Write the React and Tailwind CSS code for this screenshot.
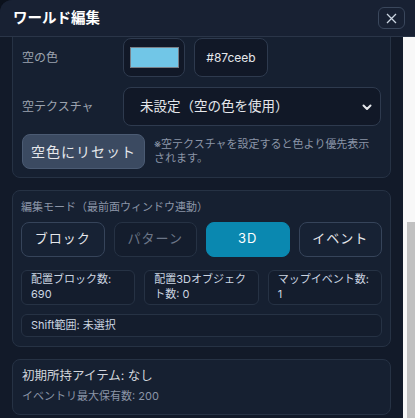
import React from 'react';

const font = { fontFamily: 'Inter, "Noto Sans CJK JP", sans-serif' };

const modes = [
  { label: 'ブロック', state: 'idle' },
  { label: 'パターン', state: 'disabled' },
  { label: '3D', state: 'active' },
  { label: 'イベント', state: 'idle' },
];

const stats = [
  ['配置ブロック数:', '690'],
  ['配置3Dオブジェク', 'ト数: 0'],
  ['マップイベント数:', '1'],
];

const ModeButton = ({ label, state }) => {
  const cls =
    state === 'active'
      ? 'bg-[#0a88b0] border-[#0a88b0] text-white'
      : state === 'disabled'
      ? 'bg-[#141d2d] border-[#263244] text-[#6b7587]'
      : 'bg-[#172234] border-[#36445a] text-[#e5e7eb]';
  return (
    <button className={`h-[35px] rounded-lg border text-[13px] tracking-[1px] ${cls}`}>
      {label}
    </button>
  );
};

const App = () => {
  return (
    <div className="w-[415px] h-[418px] bg-[#0b111c] overflow-hidden" style={font}>
      <div className="w-[418px] h-full flex flex-col rounded-tl-xl overflow-hidden bg-[#121a29]">
        {/* Header */}
        <div className="h-[37px] shrink-0 flex items-center justify-between pl-[13px] pr-[13px] bg-[#182133] border-b border-[#2a3548]">
          <h2 className="text-[14.5px] font-bold text-white">ワールド編集</h2>
          <button className="w-[27px] h-[22px] rounded-md border border-[#3a475c] text-[#cbd5e1] flex items-center justify-center">
            <svg width="11" height="11" viewBox="0 0 11 11" fill="none" stroke="currentColor" strokeWidth="1.3">
              <path d="M1 1l9 9M10 1l-9 9" />
            </svg>
          </button>
        </div>

        {/* Body */}
        <div className="flex-1 flex min-h-0">
          <div className="flex-1 overflow-hidden px-3">
            <div className="-mt-[9px] flex flex-col">
              {/* Sky section */}
              <section className="rounded-lg border border-[#263244] bg-[#162031] pl-[9px] pr-[9px] pt-[9px] pb-[8px]">
                <div className="flex items-center">
                  <span className="w-[101px] text-[12px] text-[#9ca3af]">空の色</span>
                  <div className="w-[62px] h-[39px] rounded-lg border border-[#2e3a4e] bg-[#111827] flex items-center justify-center">
                    <div className="w-[49px] h-[21px] bg-[#71c6e7] border border-[#7a7f87]" />
                  </div>
                  <div className="ml-[9px] w-[74px] h-[39px] rounded-lg border border-[#2e3a4e] bg-[#111827] flex items-center justify-center text-[12px] text-[#e5e7eb]">
                    #87ceeb
                  </div>
                </div>
                <div className="flex items-center mt-[10px]">
                  <span className="w-[101px] text-[12px] text-[#9ca3af]">空テクスチャ</span>
                  <div className="flex-1 h-[39px] rounded-lg border border-[#2e3a4e] bg-[#111827] flex items-center justify-between pl-[16px] pr-[7px] text-[13.5px] text-[#e5e7eb]">
                    <span>未設定（空の色を使用）</span>
                    <svg width="12" height="12" viewBox="0 0 12 12" fill="none" stroke="#e5e7eb" strokeWidth="2" strokeLinecap="round" strokeLinejoin="round">
                      <path d="M2.5 4.5L6 8l3.5-3.5" />
                    </svg>
                  </div>
                </div>
                <div className="flex items-start mt-[8px]">
                  <button className="shrink-0 w-[123px] h-[35px] rounded-lg border border-[#4b5b73] bg-[#3b4a61] text-[14px] tracking-[1px] text-[#e5e7eb]">
                    空色にリセット
                  </button>
                  <p className="ml-[9px] mt-[3px] w-[222px] text-[11px] leading-[14px] text-[#8b95a7]">
                    ※空テクスチャを設定すると色より優先表示されます。
                  </p>
                </div>
              </section>

              {/* Edit mode section */}
              <section className="mt-[12px] rounded-lg border border-[#263244] bg-[#162031] px-[8px] pt-[8px] pb-[9px]">
                <p className="text-[11px] text-[#8b95a7]">編集モード（最前面ウィンドウ連動）</p>
                <div className="mt-[6px] grid grid-cols-4 gap-[9px]">
                  {modes.map((m) => (
                    <ModeButton key={m.label} {...m} />
                  ))}
                </div>
                <div className="mt-[13px] grid grid-cols-3 gap-[9px]">
                  {stats.map(([a, b]) => (
                    <div key={a} className="h-[35px] rounded-md border border-[#263244] bg-[#141d2d] px-[9px] pt-[1px] text-[11px] leading-[15px] text-[#cbd5e1]">
                      <div>{a}</div>
                      <div>{b}</div>
                    </div>
                  ))}
                </div>
                <div className="mt-[9px] h-[23px] rounded-md border border-[#263244] bg-[#141d2d] px-[9px] flex items-center text-[11px] text-[#cbd5e1]">
                  Shift範囲: 未選択
                </div>
              </section>

              {/* Inventory section */}
              <section className="mt-[12px] rounded-lg border border-[#263244] bg-[#162031] px-[9px] pt-[7px] pb-[9px]">
                <p className="text-[12.5px] text-[#d1d5db]">初期所持アイテム: なし</p>
                <p className="mt-[3px] text-[11px] text-[#8b95a7]">イベントリ最大保有数: 200</p>
              </section>
            </div>
          </div>

          {/* Scrollbar */}
          <div className="w-[15px] shrink-0 bg-[#f8f8f8] pl-[4px] pt-[185px]">
            <div className="w-[9px] h-[260px] bg-[#c1c1c1]" />
          </div>
        </div>
      </div>
    </div>
  );
};

export default App;
